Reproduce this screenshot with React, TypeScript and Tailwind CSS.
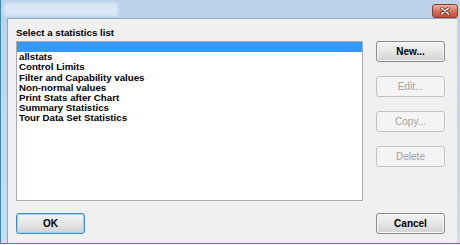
const items = [
  "",
  "allstats",
  "Control Limits",
  "Filter and Capability values",
  "Non-normal values",
  "Print Stats after Chart",
  "Summary Statistics",
  "Tour Data Set Statistics",
];

function Btn({ label, disabled, focus }: { label: string; disabled?: boolean; focus?: boolean }) {
  if (disabled) {
    return (
      <div className="flex h-[21px] w-[69px] items-center justify-center rounded-[3px] border border-[#bfc3c6] bg-[#f4f4f4] text-[10px] text-[#a0a0a0]">
        {label}
      </div>
    );
  }
  return (
    <div
      className={`flex h-[21px] w-[69px] items-center justify-center rounded-[3px] border bg-gradient-to-b from-[#f4f4f4] via-[#e6e6e6] to-[#d2d2d2] text-[10px] font-bold text-black ${
        focus ? "border-[#3c8dc6] shadow-[inset_0_0_0_1px_#9fd2f0]" : "border-[#8a8a8a] shadow-[inset_0_0_0_1px_#fbfbfb]"
      }`}
    >
      {label}
    </div>
  );
}

export default function App() {
  return (
    <div
      className="h-[245px] w-[460px] overflow-hidden bg-white"
      style={{ fontFamily: '"Liberation Sans", Arial, sans-serif' }}
    >
      <div className="flex h-[244px] w-[460px] flex-col border-b border-l border-[#3f8aa8] bg-gradient-to-b from-[#bdd3ea] to-[#c9dcf0]">
        {/* title bar */}
        <div className="relative h-[18px] shrink-0">
          <div className="absolute left-[3px] top-[3px] h-[13px] w-[114px] rounded-[2px] bg-[#d8e6f5] blur-[1px]" />
          <div className="absolute left-[431px] top-[4px] flex h-[14px] w-[26px] items-center justify-center rounded-[3px] border border-[#8e3b2e] bg-gradient-to-b from-[#ebb0a2] via-[#d57560] to-[#c24a35]">
            <svg width="10" height="8" viewBox="0 0 10 8">
              <path d="M1.5 1 L8.5 7 M8.5 1 L1.5 7" stroke="#6b2a1f" strokeWidth="3" strokeLinecap="round" />
              <path d="M1.5 1 L8.5 7 M8.5 1 L1.5 7" stroke="#ffffff" strokeWidth="1.6" strokeLinecap="round" />
            </svg>
          </div>
        </div>
        {/* client area */}
        <div className="mr-[3px] ml-[6px] flex flex-1 flex-col border-l border-t border-[#8fa7bf] bg-[#f0f0f0] pl-[8px]">
          <div className="mt-[8px] h-[12px] text-[9.7px] font-bold leading-[12px] text-black">
            Select a statistics list
          </div>
          <div className="mt-[2px] flex">
            <div className="h-[160px] w-[347px] border border-[#a7abb0] bg-white">
              {items.map((t, i) => (
                <div
                  key={i}
                  className={`h-[10.2px] pl-[2px] text-[9.7px] font-bold leading-[10.2px] text-black ${
                    i === 0 ? "bg-[#3399ff]" : ""
                  }`}
                >
                  {t}
                </div>
              ))}
            </div>
            <div className="ml-[13px] flex flex-col gap-[14px]">
              <Btn label="New..." />
              <Btn label="Edit..." disabled />
              <Btn label="Copy..." disabled />
              <Btn label="Delete" disabled />
            </div>
          </div>
          <div className="mt-[12px] flex">
            <Btn label="OK" focus />
            <div className="ml-[291px]">
              <Btn label="Cancel" />
            </div>
          </div>
        </div>
      </div>
    </div>
  );
}
